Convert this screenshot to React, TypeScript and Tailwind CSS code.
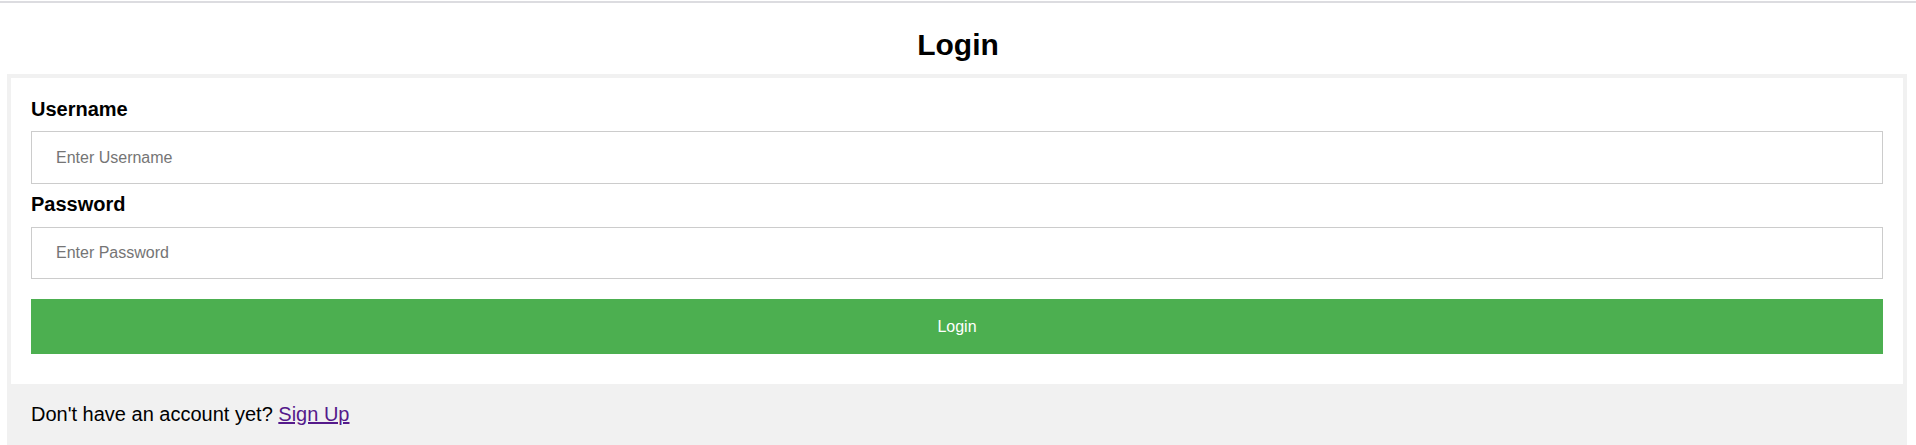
import React, { useState } from "react";

const Login = () => {
  const [username, setUsername] = useState("");
  const [password, setPassword] = useState("");

  const onSubmit = (e: React.FormEvent) => {
    e.preventDefault();
  };

  return (
    <main
      className="w-full min-h-[445px] bg-white text-black"
      style={{ fontFamily: '"Liberation Sans", Arial, sans-serif' }}
    >
      <div className="pt-px">
        <div className="h-[2px] w-full bg-[#dcdce0]" />
      </div>
      <h1 className="mt-[25px] mb-[12px] text-center text-[30px] font-bold leading-[34px]">
        Login
      </h1>
      <div className="ml-[7px] mr-[9px] bg-[#f1f1f1] px-[4px] pt-[4px]">
        <form
          onSubmit={onSubmit}
          className="flex flex-col bg-white px-[20px] pt-[20px] pb-[30px]"
        >
          <label className="block text-[20px] font-bold leading-[23px]">
            Username
          </label>
          <input
            type="text"
            value={username}
            onChange={(e) => setUsername(e.target.value)}
            placeholder="Enter Username"
            className="mt-[10px] h-[53px] w-full border border-[#ccc] px-[24px] text-[16px] outline-none placeholder:text-[#757575]"
          />
          <label className="mt-[9px] block text-[20px] font-bold leading-[23px]">
            Password
          </label>
          <input
            type="password"
            value={password}
            onChange={(e) => setPassword(e.target.value)}
            placeholder="Enter Password"
            className="mt-[11px] h-[52px] w-full border border-[#ccc] px-[24px] text-[16px] outline-none placeholder:text-[#757575]"
          />
          <button
            type="submit"
            className="mt-[20px] h-[55px] w-full cursor-pointer bg-[#4CAF50] text-[16px] text-white"
          >
            Login
          </button>
        </form>
        <div className="pl-[20px] pt-[19px] pb-[19px] text-[20px] leading-[23px]">
          Don't have an account yet?{" "}
          <a href="#" className="text-[#551A8B] underline">
            Sign Up
          </a>
        </div>
      </div>
    </main>
  );
};

export default function App() {
  return <Login />;
}
